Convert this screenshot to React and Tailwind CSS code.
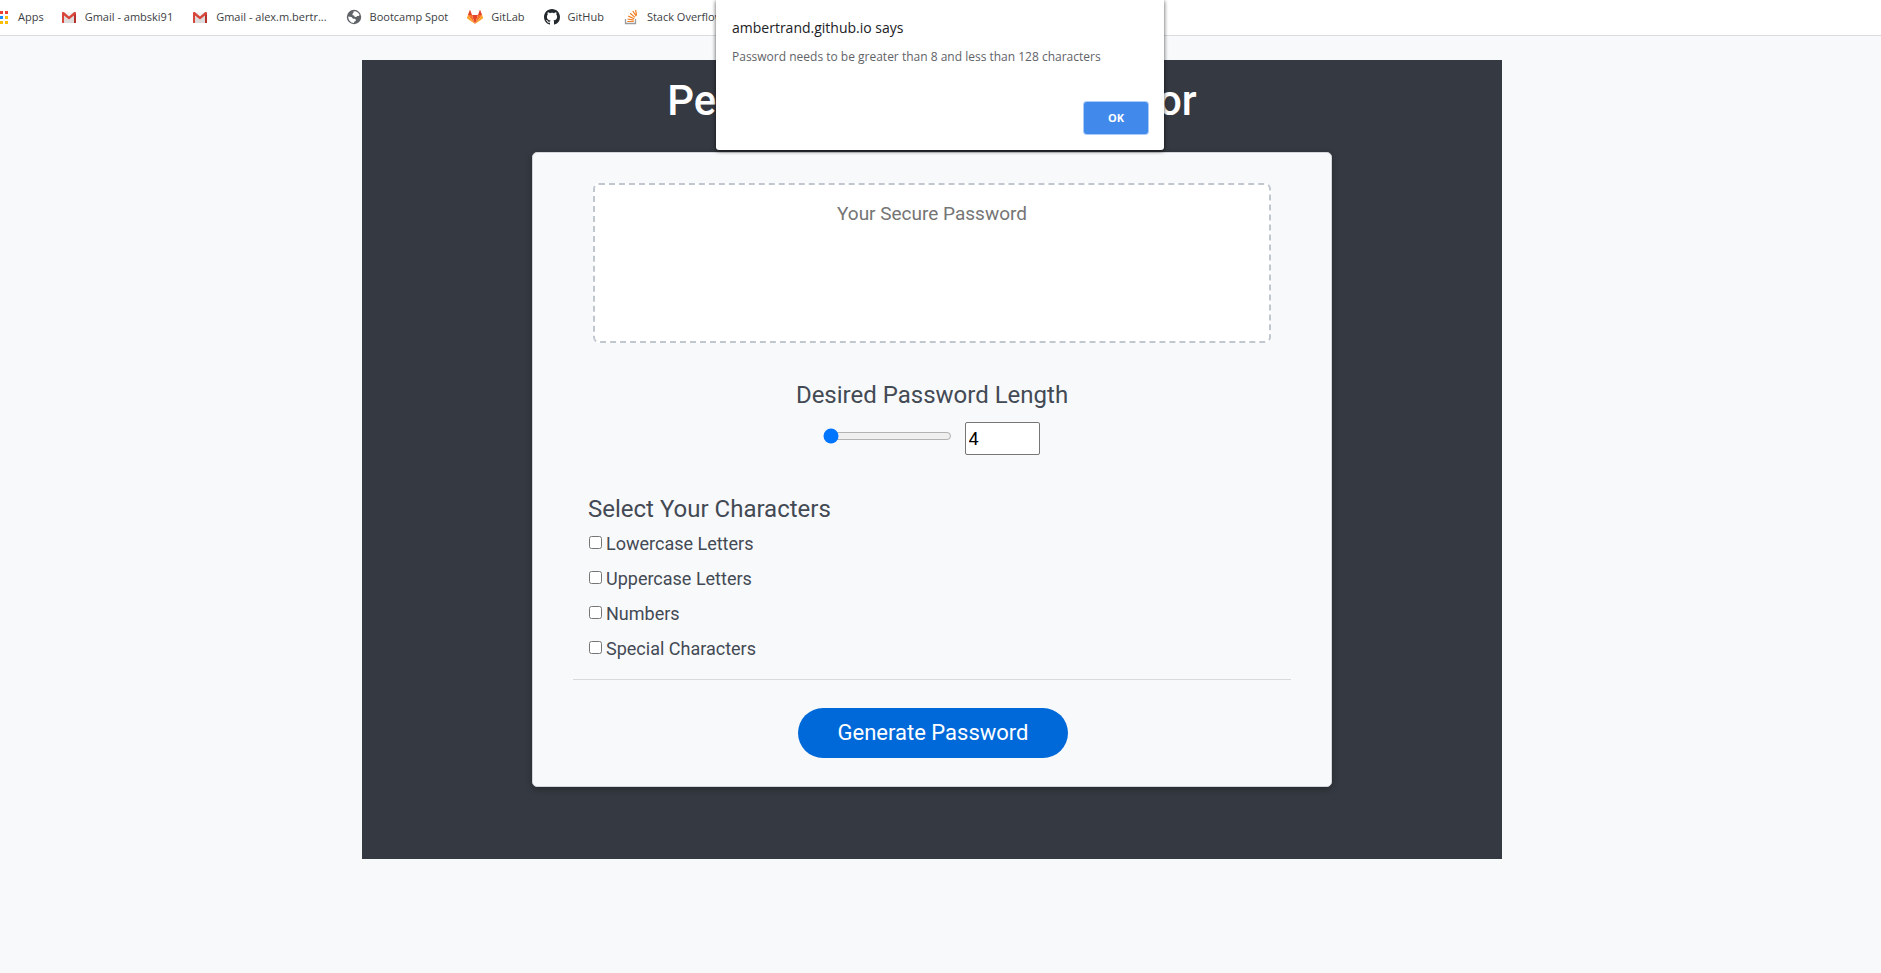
import { useState } from "react";

function AppsIcon() {
  const colors = ["#ea4335", "#ea4335", "#ea4335", "#1a8cff", "#1a8cff", "#fbbc05", "#34a853", "#fbbc05", "#fbbc05"];
  return (
    <svg width="13" height="13" viewBox="0 0 13 13" aria-hidden="true">
      {colors.map((c, i) => (
        <rect key={i} x={(i % 3) * 5} y={Math.floor(i / 3) * 5} width="3" height="3" fill={c} />
      ))}
    </svg>
  );
}

function GmailIcon() {
  return (
    <svg width="16" height="16" viewBox="0 0 16 16" aria-hidden="true">
      <rect x="1" y="3" width="14" height="11" rx="1" fill="#e6e6e6" />
      <path d="M3 14V7l5 4 5-4v7z" fill="#dcdcdc" />
      <path d="M3.5 3h9L8 7z" fill="#f5f5f5" />
      <path d="M1 4v9.3c0 .4.300.7.700.7H3V6.600l5 4 5-4V14h1.300c.4 0 .7-.3.7-.7V4c0-1-1.200-1.400-2-.8L8 7.400 3 3.200C2.200 2.600 1 3 1 4z" fill="#d8453a" />
      <path d="M13 6.600 15 5v8.300c0 .4-.3.7-.7.7H13z" fill="#b5322b" />
    </svg>
  );
}

function GlobeIcon() {
  return (
    <svg width="16" height="16" viewBox="0 0 16 16" aria-hidden="true">
      <circle cx="8" cy="8" r="7.200" fill="#5f6368" />
      <path d="M7.300 2.600 9 2.200c2.200.3 4 1.800 4.600 3.900l-1 .9h-1.400l-.9 1.100-1.800-.3-.3-1.300-1.600-.2-.2-1.500 1.200-.7z" fill="#fff" />
      <path d="M2.200 7.400 5.500 8.100l1.500 1.700h1.900l1.100 1.200-.6 1.300-1 .3-.6 1.300c-3.200-.1-5.600-2.900-5.600-6.500z" fill="#fff" />
    </svg>
  );
}

function GitLabIcon() {
  return (
    <svg width="16" height="16" viewBox="0 0 16 16" aria-hidden="true">
      <path d="M8 15 11 6H5z" fill="#e24329" />
      <path d="M8 15 5 6H.9zM8 15l3-9h4.100z" fill="#fc6d26" />
      <path d="M.9 6 0 8.700c-.1.3 0 .5.2.7L8 15zM15.100 6l.9 2.700c.1.3 0 .5-.2.700L8 15z" fill="#fca326" />
      <path d="M.9 6H5L3.300 1.200c-.1-.3-.5-.3-.6 0zM15.100 6H11l1.700-4.800c.1-.3.5-.3.6 0z" fill="#e24329" />
    </svg>
  );
}

function GitHubIcon() {
  return (
    <svg width="16" height="16" viewBox="0 0 16 16" aria-hidden="true">
      <path
        fill="#24292e"
        d="M8 0C3.58 0 0 3.58 0 8c0 3.54 2.29 6.53 5.47 7.59.4.07.55-.17.55-.38 0-.19-.01-.82-.01-1.49-2.01.37-2.53-.49-2.69-.94-.09-.23-.48-.94-.82-1.13-.28-.15-.68-.52-.01-.53.63-.01 1.08.58 1.23.82.72 1.21 1.87.87 2.33.66.07-.52.28-.87.51-1.07-1.78-.2-3.64-.89-3.64-3.95 0-.87.31-1.59.82-2.15-.08-.2-.36-1.02.08-2.12 0 0 .67-.21 2.2.82.64-.18 1.32-.27 2-.27s1.36.09 2 .27c1.53-1.04 2.2-.82 2.2-.82.44 1.1.16 1.92.08 2.12.51.56.82 1.27.82 2.15 0 3.07-1.87 3.75-3.65 3.95.29.25.54.73.54 1.48 0 1.07-.01 1.93-.01 2.200 0 .21.15.46.55.38A8.01 8.01 0 0 0 16 8c0-4.42-3.58-8-8-8z"
      />
    </svg>
  );
}

function StackIcon() {
  return (
    <svg width="16" height="16" viewBox="0 0 16 16" fill="none" aria-hidden="true">
      <path d="M2.500 10v4.500h10V10" stroke="#9a9c9f" strokeWidth="1.300" />
      <path d="M4.300 12.500h6.400M4.500 10l6.300 1.100M5.300 7.100l5.900 2.600M7.100 4.300l4.900 4.100M9.700 2l3.600 5.200M12.600.8l.9 5.600" stroke="#f48024" strokeWidth="1.200" />
    </svg>
  );
}

const bookmarks = [
  { label: "Gmail - ambski91", Icon: GmailIcon },
  { label: "Gmail - alex.m.bertr...", Icon: GmailIcon },
  { label: "Bootcamp Spot", Icon: GlobeIcon },
  { label: "GitLab", Icon: GitLabIcon },
  { label: "GitHub", Icon: GitHubIcon },
  { label: "Stack Overflow", Icon: StackIcon },
];

const characterSets = ["Lowercase Letters", "Uppercase Letters", "Numbers", "Special Characters"];

function BookmarksBar() {
  return (
    <nav aria-label="Bookmarks" className="flex h-9 items-center gap-[17px] overflow-hidden border-b border-[#dadce0] bg-white pb-px font-['Open_Sans',sans-serif] text-[11px] whitespace-nowrap text-[#3c4043]">
      <a href="#apps" className="-ml-[5px] flex items-center gap-[10px]">
        <AppsIcon />
        Apps
      </a>
      <div className="flex items-center gap-[19px]">
        {bookmarks.map(({ label, Icon }) => (
          <a key={label} href="#bookmark" className="flex items-center gap-2">
            <Icon />
            {label}
          </a>
        ))}
      </div>
    </nav>
  );
}

function AlertDialog({ onClose }) {
  return (
    <div
      role="alertdialog"
      aria-labelledby="alert-title"
      aria-describedby="alert-message"
      className="absolute top-0 right-px left-0 mx-auto flex h-[150px] w-[448px] flex-col rounded-b-[3px] bg-white px-4 pt-[18px] pb-4 font-['Open_Sans',sans-serif] shadow-[0_1px_4px_rgba(0,0,0,0.7)]"
    >
      <h2 id="alert-title" className="text-[14px] leading-5 text-[#202124]">
        ambertrand.github.io says
      </h2>
      <p id="alert-message" className="mt-[9px] text-[12px] leading-5 text-[#5f6368]">
        Password needs to be greater than 8 and less than 128 characters
      </p>
      <button
        type="button"
        onClick={onClose}
        className="mt-auto h-8 w-16 self-end rounded-[3px] bg-[#4189eb] text-[11px] font-bold text-white ring-1 ring-[#a9cbf8]"
      >
        OK
      </button>
    </div>
  );
}

export default function App() {
  const [length, setLength] = useState(4);
  const [alertOpen, setAlertOpen] = useState(true);

  return (
    <div className="relative min-h-screen bg-[#f8f9fb] font-[Roboto,sans-serif] text-[#434a54]">
      <BookmarksBar />
      <div className="pt-6 pr-[17px] pb-16">
        <main className="mx-auto max-w-[1140px] bg-[#353941] pb-[72px]">
          <h1 className="pt-4 pb-[26px] text-center text-[42px] leading-[50px] font-medium text-white">
            Perfect Password Generator
          </h1>
          <form
            onSubmit={(e) => e.preventDefault()}
            className="mx-auto max-w-[800px] rounded-[5px] border border-[#d3d6da] bg-[#f8f9fb] px-10 pt-[30px] pb-7 shadow-[0_2px_6px_rgba(0,0,0,0.3)]"
          >
            <div className="px-5">
              <textarea
                readOnly
                aria-label="Generated password"
                placeholder="Your Secure Password"
                className="block h-40 w-full resize-none rounded-md border-2 border-dashed border-[#c1c7cf] bg-white px-4 py-[15px] text-center text-[19px] leading-7 placeholder:text-[#757575]"
              />
            </div>
            <div className="mt-[37px] flex flex-col items-center">
              <label htmlFor="length-number" className="text-[24px] leading-[30px]">
                Desired Password Length
              </label>
              <div className="mt-3 flex items-center gap-[13px] pr-[2px]">
                <input
                  type="range"
                  aria-label="Password length slider"
                  min="4"
                  max="128"
                  value={length}
                  onChange={(e) => setLength(Number(e.target.value))}
                  className="mb-[5px] h-4 w-[129px]"
                />
                <input
                  id="length-number"
                  type="number"
                  value={length}
                  onChange={(e) => setLength(Number(e.target.value))}
                  className="h-[33px] w-[75px] rounded-[2px] border border-[#767676] bg-white pb-px pl-[3px] text-[18px] text-black"
                />
              </div>
            </div>
            <fieldset className="mt-[37px] px-[15px]">
              <legend className="text-[24px] leading-[34px]">Select Your Characters</legend>
              {characterSets.map((label) => (
                <label key={label} className="flex h-[35px] items-center gap-1 pl-px text-[18px]">
                  <input type="checkbox" className="mb-[3px] size-[13px]" />
                  {label}
                </label>
              ))}
            </fieldset>
            <hr className="mt-[13px] border-[#d8dbde]" />
            <div className="mt-7 flex justify-center pl-[2px]">
              <button
                type="submit"
                onClick={() => setAlertOpen(true)}
                className="h-[50px] rounded-full bg-[#0069d9] px-10 pb-px text-[22px] text-white"
              >
                Generate Password
              </button>
            </div>
          </form>
        </main>
      </div>
      {alertOpen && <AlertDialog onClose={() => setAlertOpen(false)} />}
    </div>
  );
}
